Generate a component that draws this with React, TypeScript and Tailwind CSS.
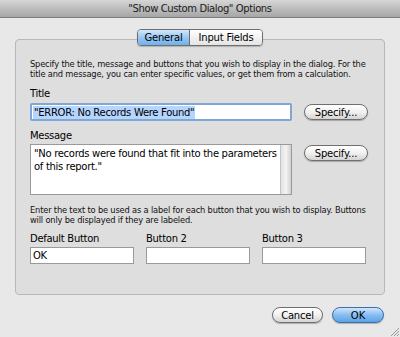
import React from "react";

const font = { fontFamily: '"DejaVu Sans", "Liberation Sans", sans-serif' };

function PillButton({ label, className = "" }: { label: string; className?: string }) {
  return (
    <div
      className={
        "flex items-center justify-center rounded-full border border-[#6f6f6f] bg-gradient-to-b from-[#ffffff] via-[#f1f1f1] to-[#d4d4d4] text-[10px] tracking-[-0.2px] text-black shadow-[0_1px_1px_rgba(0,0,0,0.25)] " +
        className
      }
    >
      {label}
    </div>
  );
}

export default function App() {
  return (
    <div className="w-[400px] h-[337px] bg-[#e8e8e8] flex flex-col relative overflow-hidden text-black" style={font}>
      {/* Title bar */}
      <div className="h-[18px] shrink-0 bg-gradient-to-b from-[#d6d6d6] to-[#a6a6a6] border-b border-[#7e7e7e] flex items-center justify-center text-[10px] tracking-[-0.4px] text-[#1a1a1a]">
        "Show Custom Dialog" Options
      </div>

      {/* Tab box */}
      <div className="relative mx-[15px] mt-[21px] h-[256px] rounded-[4px] border border-[#b8b8b8] bg-[#dedede] flex flex-col px-[14px] pt-[19px]">
        {/* Tabs */}
        <div className="absolute left-1/2 -translate-x-1/2 -top-[11px] flex h-[17px] rounded-[4px] border border-[#6e6e6e] overflow-hidden text-[10px] tracking-[-0.2px] shadow-[0_1px_1px_rgba(0,0,0,0.2)]">
          <div className="w-[52px] flex items-center justify-center bg-gradient-to-b from-[#d3e7fb] via-[#99c7f2] to-[#6fb0ec] border-r border-[#6e6e6e]">
            General
          </div>
          <div className="w-[72px] flex items-center justify-center bg-gradient-to-b from-[#ffffff] to-[#e4e4e4]">
            Input Fields
          </div>
        </div>

        <p className="text-[8.3px] leading-[10px] tracking-[-0.18px] text-[#111] w-[344px]">
          Specify the title, message and buttons that you wish to display in the dialog. For the title and message, you can enter specific values, or get them from a calculation.
        </p>

        <div className="mt-[9px] text-[10px] leading-[12px] tracking-[-0.3px]">Title</div>
        <div className="mt-[3px] flex items-center">
          <div className="w-[262px] h-[18px] border-2 border-[#7fa7d6] rounded-[2px] bg-white flex items-center px-[1px]">
            <span className="bg-[#b5d5ff] text-[10px] leading-[13px] tracking-[-0.3px] px-[1px]">"ERROR: No Records Were Found"</span>
          </div>
          <PillButton label="Specify..." className="ml-[12px] w-[64px] h-[16px]" />
        </div>

        <div className="mt-[9px] text-[10px] leading-[12px] tracking-[-0.3px]">Message</div>
        <div className="mt-[2px] flex items-start">
          <div className="w-[262px] h-[51px] border border-[#9a9a9a] bg-white flex">
            <div className="flex-1 pl-[3px] pt-[2px] text-[10px] leading-[13px] tracking-[-0.3px]">
              "No records were found that fit into the parameters of this report."
            </div>
            <div className="w-[11px] bg-gradient-to-r from-[#e2e2e2] via-[#f4f4f4] to-[#d0d0d0] border-l border-[#c4c4c4]" />
          </div>
          <PillButton label="Specify..." className="ml-[12px] mt-[1px] w-[64px] h-[16px]" />
        </div>

        <p className="mt-[10px] text-[8.3px] leading-[10px] tracking-[-0.18px] text-[#111] w-[344px]">
          Enter the text to be used as a label for each button that you wish to display. Buttons will only be displayed if they are labeled.
        </p>

        <div className="mt-[8px] flex gap-[12px]">
          {[
            ["Default Button", "OK"],
            ["Button 2", ""],
            ["Button 3", ""],
          ].map(([label, value]) => (
            <div key={label} className="w-[104px] flex flex-col">
              <div className="text-[10px] leading-[12px] tracking-[-0.3px]">{label}</div>
              <div className="mt-[2px] h-[17px] border border-[#9a9a9a] bg-white text-[10px] leading-[15px] tracking-[-0.3px] px-[2px]">
                {value}
              </div>
            </div>
          ))}
        </div>
      </div>

      {/* Bottom buttons */}
      <div className="mt-[12px] flex justify-end pr-[16px] gap-[9px]">
        <PillButton label="Cancel" className="w-[51px] h-[16px]" />
        <div className="w-[52px] h-[16px] flex items-center justify-center rounded-full border border-[#3d6eaa] bg-gradient-to-b from-[#cfe5fb] via-[#86bdf0] to-[#5aa3e8] text-[10px] shadow-[0_1px_1px_rgba(0,0,0,0.25)]">
          OK
        </div>
      </div>

      {/* Resize grip */}
      <svg className="absolute right-[1px] bottom-[1px]" width="10" height="10" viewBox="0 0 10 10">
        <line x1="2" y1="10" x2="10" y2="2" stroke="#9a9a9a" strokeWidth="1" />
        <line x1="5" y1="10" x2="10" y2="5" stroke="#9a9a9a" strokeWidth="1" />
        <line x1="8" y1="10" x2="10" y2="8" stroke="#9a9a9a" strokeWidth="1" />
      </svg>
    </div>
  );
}
